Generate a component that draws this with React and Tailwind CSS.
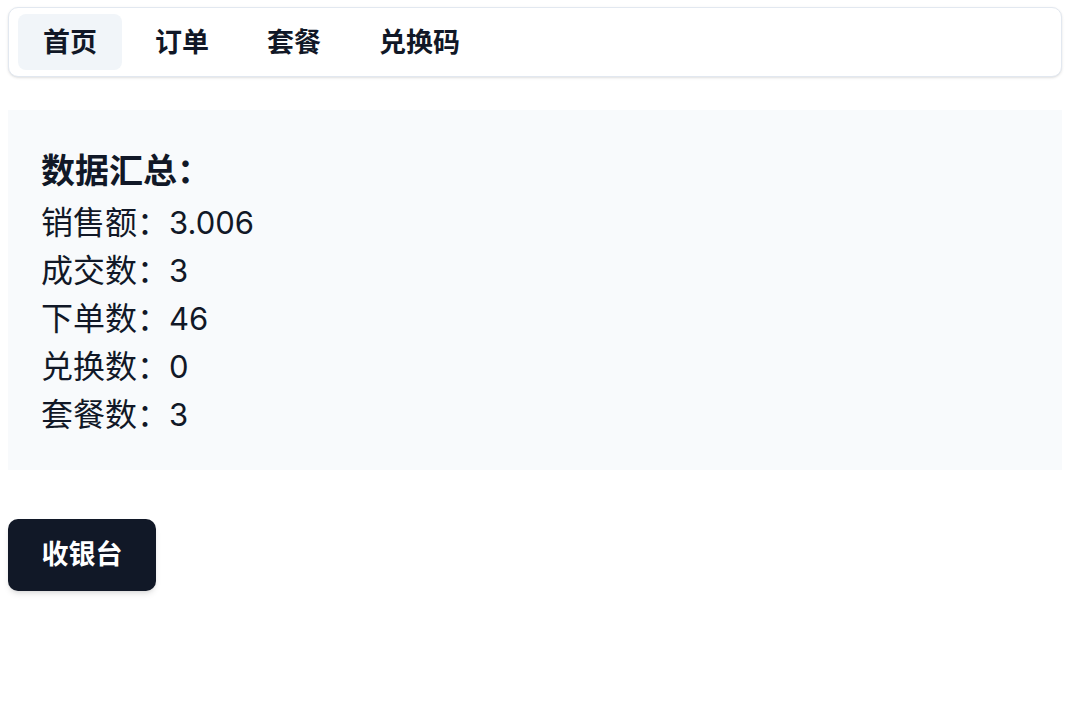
import React from 'react';

const tabs = ['首页', '订单', '套餐', '兑换码'];

const stats = [
    { label: '销售额', value: '3.006' },
    { label: '成交数', value: '3' },
    { label: '下单数', value: '46' },
    { label: '兑换数', value: '0' },
    { label: '套餐数', value: '3' },
];

export default function App() {
    return (
        <div className="min-h-screen bg-white px-2 pt-[7px] text-[#111827]" style={{ fontFamily: '"Inter", "Noto Sans CJK SC", sans-serif' }}>
            <nav className="flex gap-2 rounded-[10px] border border-[#e2e8f0] bg-white p-[6px] pl-[9px] shadow-sm">
                {tabs.map((tab, i) => (
                    <button
                        key={tab}
                        className={`h-[56px] rounded-lg px-[25px] text-[27px] font-bold leading-none ${i === 0 ? 'bg-[#f1f5f9]' : ''}`}
                    >
                        {tab}
                    </button>
                ))}
            </nav>

            <section className="mt-[33px] bg-[#f8fafc] px-[33px] pt-[33px] pb-[31px]">
                <h2 className="text-[34px] font-bold leading-[56px]">数据汇总：</h2>
                {stats.map(s => (
                    <p key={s.label} className="text-[32px] leading-[48px]">
                        {s.label}：<span className="text-[31px]">{s.value}</span>
                    </p>
                ))}
            </section>

            <button className="mt-[49px] h-[72px] w-[148px] rounded-[10px] bg-[#111827] text-[27px] font-bold text-white shadow-md">
                收银台
            </button>
        </div>
    );
}
